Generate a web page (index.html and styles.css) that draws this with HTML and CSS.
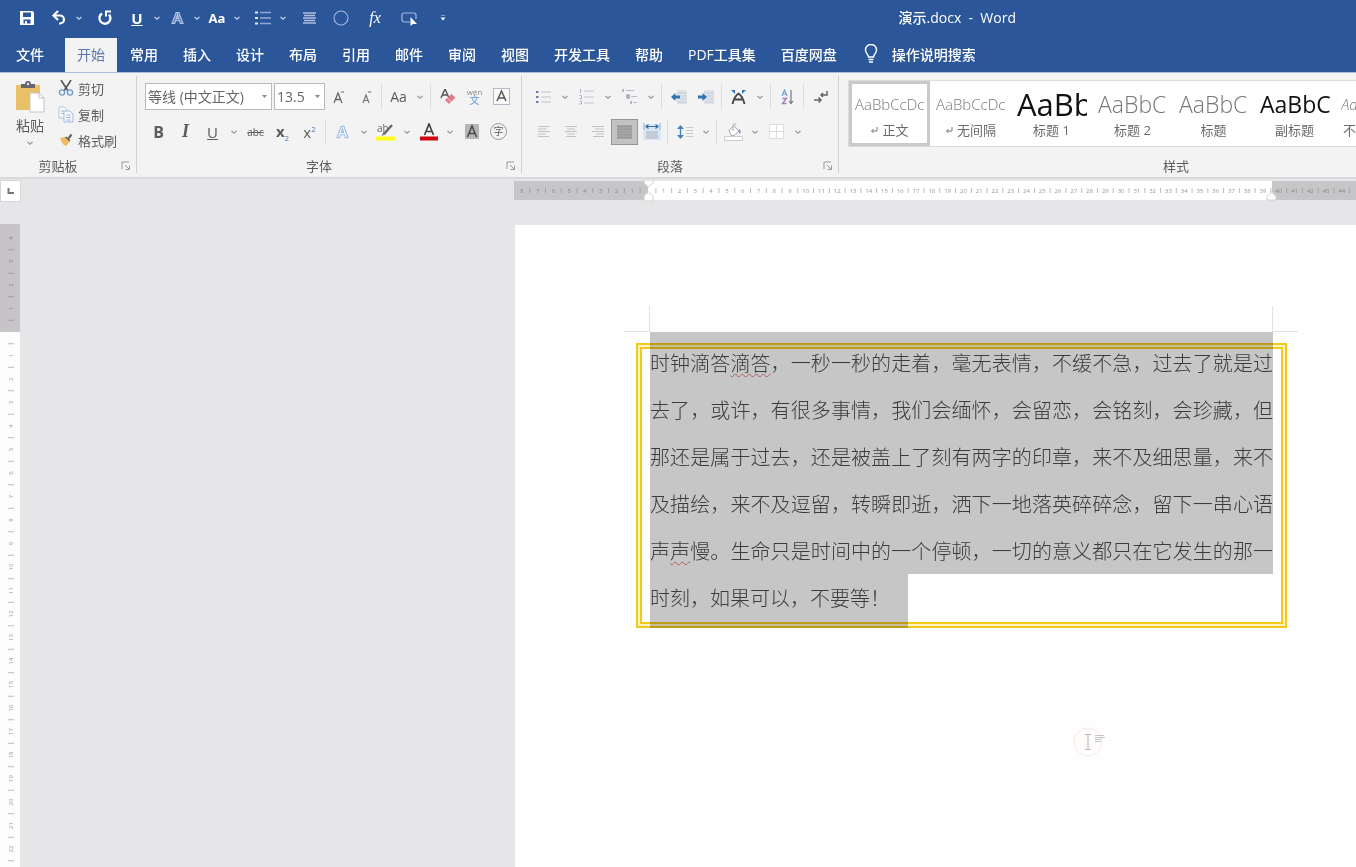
FILE: index.html
```html
<!DOCTYPE html>
<html lang="zh-CN">
<head>
<meta charset="utf-8">
<title>演示.docx - Word</title>
<link rel="stylesheet" href="styles.css">
</head>
<body>
<svg class="defs" aria-hidden="true">
  <symbol id="chev" viewBox="0 0 8 8"><path d="M1.500 3 4 5.2 6.500 3" fill="none" stroke="currentColor" stroke-width="1.3"/></symbol>
  <symbol id="launch" viewBox="0 0 10 10"><path d="M1 8V1h7M4 4l4 4M8.500 4.500v4h-4" fill="none" stroke="#999" stroke-width="1"/></symbol>
  <symbol id="ret" viewBox="0 0 8 8"><path d="M7 1v4H2M3.500 3 1.500 5l2 2" fill="none" stroke="#777" stroke-width="1"/></symbol>
</svg>

<header class="titlebar">
  <div class="qat">
    <button class="ic" aria-label="保存"><svg width="14" height="14" viewBox="0 0 14 14"><path fill="#fff" fill-rule="evenodd" d="M0 0h12.500L14 1.500V14H0zM3 1.500v4.500h8V1.500zM3.500 8.500v4h1.500V10h2v2.500h3.500v-4z"/></svg></button>
    <div class="pair">
      <button class="ic" aria-label="撤消"><svg width="16" height="16" viewBox="0 0 16 16"><path d="M3 5.500h6a4 4 0 0 1 0 8H8" fill="none" stroke="#fff" stroke-width="2.200"/><path d="M7 1 2.500 5.500 7 10" fill="none" stroke="#fff" stroke-width="2.200"/></svg></button>
      <button class="ch" aria-label="撤消列表"><svg><use href="#chev"/></svg></button>
    </div>
    <button class="ic" aria-label="重复"><svg width="16" height="16" viewBox="0 0 16 16"><path d="M5 3.500A5.500 5.500 0 1 0 12 4.500" fill="none" stroke="#fff" stroke-width="2.400"/><path d="M8 1.500h6M9 1.500v5" fill="none" stroke="#fff" stroke-width="2"/></svg></button>
    <div class="pair">
      <button class="ic q-u" aria-label="下划线">U</button>
      <button class="ch" aria-label="下划线样式"><svg><use href="#chev"/></svg></button>
      <button class="ic" aria-label="文本效果"><svg width="13" height="14" viewBox="0 0 14 14"><path d="M1 13 5.500 1h3L13 13h-3l-1-3H5l-1 3zM5.800 7.500h2.400L7 3.800z" fill="#6f8cc0" stroke="#b9c9e6" stroke-width="1.100"/></svg></button>
      <button class="ch" aria-label="文本效果列表"><svg><use href="#chev"/></svg></button>
      <button class="ic q-aa" aria-label="更改大小写">Aa</button>
      <button class="ch" aria-label="大小写列表"><svg><use href="#chev"/></svg></button>
    </div>
    <div class="pair">
      <button class="ic" aria-label="项目符号"><svg width="16" height="14" viewBox="0 0 16 14"><path d="M0 1.500h3M0 7h3M0 12.500h3" stroke="#e4ebf7" stroke-width="2"/><path d="M5 1.500h11M5 7h11M5 12.500h11" stroke="#8fa9d6" stroke-width="1.300"/></svg></button>
      <button class="ch" aria-label="项目符号列表"><svg><use href="#chev"/></svg></button>
    </div>
    <button class="ic" aria-label="居中"><svg width="13" height="12" viewBox="0 0 13 12"><path d="M0 1h13M1 3.500h11M0 6h13M1 8.500h11M0 11h13" stroke="#aebfe0" stroke-width="1.300"/></svg></button>
    <div class="pair wide">
      <button class="ic" aria-label="椭圆"><svg width="16" height="16" viewBox="0 0 16 16"><circle cx="8" cy="8" r="7" fill="none" stroke="#a3b7dd" stroke-width="1.100"/></svg></button>
      <button class="ic q-fx" aria-label="公式"><i>fx</i></button>
      <button class="ic" aria-label="形状"><svg width="17" height="15" viewBox="0 0 17 15"><path d="M9 11H3a2 2 0 0 1-2-2V4a2 2 0 0 1 2-2h10a2 2 0 0 1 2 2v4" fill="none" stroke="#a9bce0" stroke-width="1.200"/><path d="M9.500 6v9l2.500-2h4z" fill="#fff"/></svg></button>
      <button class="ic" aria-label="自定义快速访问工具栏"><svg width="8" height="8" viewBox="0 0 8 8"><path d="M2 1.500h4" stroke="#7f9ccf"/><path d="M1.500 3.500h5L4 6.500z" fill="#fff"/></svg></button>
    </div>
  </div>
  <h1 class="doc-title">演示.docx&nbsp; -&nbsp; Word</h1>
</header>

<nav class="tabs">
  <button class="tab file">文件</button>
  <button class="tab active">开始</button>
  <button class="tab">常用</button>
  <button class="tab">插入</button>
  <button class="tab">设计</button>
  <button class="tab">布局</button>
  <button class="tab">引用</button>
  <button class="tab">邮件</button>
  <button class="tab">审阅</button>
  <button class="tab">视图</button>
  <button class="tab">开发工具</button>
  <button class="tab">帮助</button>
  <button class="tab">PDF工具集</button>
  <button class="tab">百度网盘</button>
  <button class="tab tell"><svg width="14" height="20" viewBox="0 0 14 20"><path d="M4.500 13c0-2.500-3-3.500-3-7a5.500 5.500 0 0 1 11 0c0 3.500-3 4.500-3 7z" fill="none" stroke="#fff" stroke-width="1.400"/><path d="M4.500 15.500h5M5 18h4" stroke="#fff" stroke-width="1.300"/></svg>操作说明搜索</button>
</nav>

<section class="ribbon">
  <div class="group clipboard">
    <div class="group-body">
      <button class="paste">
        <svg width="30" height="32" viewBox="0 0 30 32"><rect x="1" y="4" width="24" height="25" rx="1" fill="#e9bf68"/><path d="M6 3h4a3 3 0 0 1 6 0h4v4H6z" fill="#66666c"/><circle cx="13" cy="3" r="1.200" fill="#eee"/><path d="M15 12h9l5 5v14H15z" fill="#fff" stroke="#c4c4c4"/><path d="M24 12v5h5" fill="none" stroke="#c4c4c4"/></svg>
        <span>粘贴</span>
        <svg class="cv"><use href="#chev"/></svg>
      </button>
      <div class="small-col">
        <button class="small"><svg width="16" height="16" viewBox="0 0 16 16"><path d="M3 0l7 11M13 0 6 11" stroke="#555" stroke-width="1.600"/><circle cx="4" cy="12.500" r="2.600" fill="none" stroke="#6f9cce" stroke-width="1.400"/><circle cx="12" cy="12.500" r="2.600" fill="none" stroke="#6f9cce" stroke-width="1.400"/></svg>剪切</button>
        <button class="small"><svg width="16" height="17" viewBox="0 0 16 17"><path d="M1 1h5l3 3v8H1z" fill="#f8faff" stroke="#b4c3df"/><path d="M6 5h6l3 3v8H6z" fill="#f8faff" stroke="#a5b7da"/><path d="M3 5h3M3 7.500h3M8 9h5M8 11.500h5M8 14h5" stroke="#a5b7da"/></svg>复制</button>
        <button class="small"><svg width="16" height="16" viewBox="0 0 16 16"><path d="M2 6l6-1 4 4-4 5c-3-1-5-4-6-8z" fill="#ecbb62"/><path d="M7.500 5l4.500 4" stroke="#666" stroke-width="1.600"/><path d="M10 7l3.500-4.500" stroke="#666" stroke-width="2.200"/></svg>格式刷</button>
      </div>
    </div>
    <div class="group-label"><span>剪贴板</span><button class="launcher" aria-label="剪贴板设置"><svg width="10" height="10"><use href="#launch"/></svg></button></div>
  </div>

  <div class="group font">
    <div class="group-body rows">
      <div class="row">
        <label class="combo name"><select aria-label="字体"><option>等线 (中文正文)</option></select><svg width="5" height="3" viewBox="0 0 5 3"><path d="M0 0h5L2.500 3z" fill="#888"/></svg></label>
        <label class="combo size"><select aria-label="字号"><option>13.5</option></select><svg width="5" height="3" viewBox="0 0 5 3"><path d="M0 0h5L2.500 3z" fill="#888"/></svg></label>
        <button class="rb" aria-label="增大字号"><svg width="14" height="16" viewBox="0 0 14 16"><path d="M2 14 6 4l4 10M3.500 10.500h5" fill="none" stroke="#666" stroke-width="1.300"/><path d="M9 4l1.500-2L12 4" fill="none" stroke="#777"/></svg></button>
        <button class="rb" aria-label="减小字号"><svg width="14" height="16" viewBox="0 0 14 16"><path d="M4 14 7 6l3 8M5 11.500h4" fill="none" stroke="#777" stroke-width="1.200"/><path d="M9 2l1.500 2L12 2" fill="none" stroke="#777"/></svg></button>
        <span class="sep"></span>
        <button class="rb t-aa" aria-label="更改大小写">Aa</button><button class="ch" aria-label="大小写选项"><svg><use href="#chev"/></svg></button>
        <span class="sep"></span>
        <button class="rb" aria-label="清除格式"><svg width="16" height="16" viewBox="0 0 16 16"><path d="M1 9 5 0l4 9M2.500 6h5" fill="none" stroke="#555" stroke-width="1.400"/><path d="M5 11 11.500 5l4 3.500L9 15z" fill="#e27b88"/><path d="M7.500 9.500l3.500 3.300" stroke="#f7cdd2"/></svg></button>
        <button class="rb t-py" aria-label="拼音指南"><small>wén</small><b>文</b></button>
        <button class="rb" aria-label="字符边框"><svg width="17" height="17" viewBox="0 0 17 17"><rect x=".5" y=".5" width="16" height="16" fill="#fafafa" stroke="#b4bac6"/><path d="M4 13 8.500 3 13 13M5.500 10h6" fill="none" stroke="#555" stroke-width="1.500"/></svg></button>
      </div>
      <div class="row">
        <button class="rb t-b">B</button>
        <button class="rb t-i">I</button>
        <button class="rb t-u">U</button><button class="ch" aria-label="下划线选项"><svg><use href="#chev"/></svg></button>
        <button class="rb t-s">abc</button>
        <button class="rb t-x"><span><b>x</b><sub>2</sub></span></button>
        <button class="rb t-x"><span>x<sup>2</sup></span></button>
        <span class="sep"></span>
        <button class="rb" aria-label="文本效果和版式"><svg width="13" height="14" viewBox="0 0 14 14"><path d="M1 13 5.500 1h3L13 13h-3l-1-3H5l-1 3zM5.800 7.500h2.400L7 3.800z" fill="#f3f8ff" stroke="#9dbbe4" stroke-width="1.200"/></svg></button><button class="ch" aria-label="文本效果选项"><svg><use href="#chev"/></svg></button>
        <button class="rb" aria-label="突出显示"><svg width="19" height="18" viewBox="0 0 19 18"><text x="1" y="9" class="ab">ab</text><path d="M8 11 16 2" stroke="#666" stroke-width="2.400"/><path d="M5.500 13 10 11 7.500 9z" fill="#777"/><path d="M0 13.500h19v4H0z" fill="#ffff1e"/></svg></button><button class="ch" aria-label="突出显示颜色"><svg><use href="#chev"/></svg></button>
        <button class="rb" aria-label="字体颜色"><svg width="18" height="18" viewBox="0 0 18 18"><path d="M4.500 12 9 1l4.500 11M6 8.500h6" fill="none" stroke="#444" stroke-width="1.700"/><path d="M0 13.500h18v4H0z" fill="#d0060e"/></svg></button><button class="ch" aria-label="字体颜色选项"><svg><use href="#chev"/></svg></button>
        <button class="rb" aria-label="字符底纹"><svg width="14" height="15" viewBox="0 0 14 15"><path d="M0 0h14v15H0z" fill="#b5b5b5"/><path d="M2.500 13 7 2l4.500 11M4 9.500h6" fill="none" stroke="#4c4c4c" stroke-width="1.600"/></svg></button>
        <button class="rb t-circ" aria-label="带圈字符"><span>字</span></button>
      </div>
    </div>
    <div class="group-label"><span>字体</span><button class="launcher" aria-label="字体设置"><svg width="10" height="10"><use href="#launch"/></svg></button></div>
  </div>

  <div class="group para">
    <div class="group-body rows">
      <div class="row">
        <button class="rb" aria-label="项目符号"><svg width="15" height="14" viewBox="0 0 15 14"><path d="M0 2h2.500M0 7h2.500M0 12h2.500" stroke="#6a7da8" stroke-width="2"/><path d="M5 2h10M5 7h10M5 12h10" stroke="#bfc3ce"/></svg></button><button class="ch" aria-label="项目符号选项"><svg><use href="#chev"/></svg></button>
        <button class="rb" aria-label="编号"><svg width="15" height="16" viewBox="0 0 15 16"><path d="M1.500 0v4M.5 6.500h2v3h-2M.5 12h2v3h-2" fill="none" stroke="#aab0bf"/><path d="M5 2h10M5 8h10M5 14h10" stroke="#c3c6cf"/></svg></button><button class="ch" aria-label="编号选项"><svg><use href="#chev"/></svg></button>
        <button class="rb" aria-label="多级列表"><svg width="16" height="15" viewBox="0 0 16 15"><path d="M1 0v3M5 6h2v3H5zM9 12v3" fill="none" stroke="#8790aa" stroke-width="1.200"/><path d="M4 1.500h8M9 7.500h6M11 13.500h4" stroke="#b9bdc9"/></svg></button><button class="ch" aria-label="多级列表选项"><svg><use href="#chev"/></svg></button>
        <span class="sep"></span>
        <button class="rb" aria-label="减少缩进量"><svg width="16" height="14" viewBox="0 0 16 14"><path d="M6 0h10v14H6z" fill="#dfe2e8"/><path d="M6 3h10M9 6h7M9 9h7M6 12h10" stroke="#c9cdd5"/><path d="M0 7l4.500-4v2.500H9v3H4.500V11z" fill="#2f75b5"/></svg></button>
        <button class="rb" aria-label="增加缩进量"><svg width="16" height="14" viewBox="0 0 16 14"><path d="M6 0h10v14H6z" fill="#dfe2e8"/><path d="M6 3h10M9 6h7M9 9h7M6 12h10" stroke="#c9cdd5"/><path d="M9 7 4.500 3v2.500H0v3h4.500V11z" fill="#2f75b5"/></svg></button>
        <span class="sep"></span>
        <button class="rb" aria-label="中文版式"><svg width="17" height="16" viewBox="0 0 17 16"><path d="M2.500 15C4 9 6 6 8.500 4.500 11 6 13 9 14.500 15M5 10.500h7" fill="none" stroke="#444" stroke-width="1.900"/><path d="M1 1h4v4zM16 1h-4v4z" fill="#2f75b5"/></svg></button><button class="ch" aria-label="中文版式选项"><svg><use href="#chev"/></svg></button>
        <span class="sep"></span>
        <button class="rb" aria-label="排序"><svg width="13" height="16" viewBox="0 0 13 16"><path d="M1 7 3.500 1 6 7M2 5h3" fill="none" stroke="#6f9fd3" stroke-width="1.200"/><path d="M1.500 9.500h4l-4 5h4" fill="none" stroke="#a678c0" stroke-width="1.300"/><path d="M10 1v13M8 12l2 2.500 2-2.500" fill="none" stroke="#777" stroke-width="1.200"/></svg></button>
        <span class="sep"></span>
        <button class="rb" aria-label="显示编辑标记"><svg width="16" height="14" viewBox="0 0 16 14"><path d="M14 1v4H8M10 3 8 5l2 2M1 10h7M5.500 7.500 8 10l-2.500 2.500" fill="none" stroke="#666" stroke-width="1.500"/></svg></button>
      </div>
      <div class="row">
        <button class="rb" aria-label="左对齐"><svg width="14" height="13" viewBox="0 0 14 13"><path d="M1 1.500h12M1 4h9M1 6.500h12M1 9h8M1 11.500h11" stroke="#c2c2c2"/></svg></button>
        <button class="rb" aria-label="居中"><svg width="14" height="13" viewBox="0 0 14 13"><path d="M1 1.500h12M3 4h8M1 6.500h12M3 9h8M2 11.500h10" stroke="#c2c2c2"/></svg></button>
        <button class="rb" aria-label="右对齐"><svg width="14" height="13" viewBox="0 0 14 13"><path d="M1 1.500h12M4 4h9M1 6.500h12M5 9h8M2 11.500h11" stroke="#c2c2c2"/></svg></button>
        <button class="rb on" aria-label="两端对齐" aria-pressed="true"><svg width="15" height="14" viewBox="0 0 15 14"><path d="M0 0h15v14H0z" fill="#a6a6a6"/><path d="M0 1.500h15M0 4.200h15M0 7h15M0 9.800h15M0 12.500h15" stroke="#989898"/></svg></button>
        <button class="rb" aria-label="分散对齐"><svg width="18" height="18" viewBox="0 0 18 18"><path d="M0 1h18v16H0z" fill="#dbe6f5"/><path d="M3 8h12v8H3z" fill="#c4cbd6"/><path d="M1 0v7M17 0v7" stroke="#9db5d8"/><path d="M3 3.500h12M5.500 1.500l-2.500 2 2.500 2M12.500 1.500l2.500 2-2.500 2" fill="none" stroke="#336fae" stroke-width="1.200"/></svg></button>
        <span class="sep"></span>
        <button class="rb" aria-label="行和段落间距"><svg width="16" height="16" viewBox="0 0 16 16"><path d="M3.500 2v12" stroke="#4682bd" stroke-width="1.400"/><path d="M0 5 3.500 1 7 5zM0 11l3.500 4L7 11z" fill="#4682bd"/><path d="M9 3.500h7M9 6.500h7M9 9.500h7M9 12.500h7" stroke="#c9c9c9"/></svg></button><button class="ch" aria-label="行距选项"><svg><use href="#chev"/></svg></button>
        <span class="sep"></span>
        <button class="rb" aria-label="底纹"><svg width="20" height="18" viewBox="0 0 20 18"><path d="M5 7 10 3l5 5-5 4.500H7z" fill="#fff" stroke="#a9a9b3"/><path d="M9 8V2.500a1.500 1.500 0 0 1 3 0" fill="none" stroke="#a9a9b3"/><path d="M15 6c2 1 2 3 1 5-1-1-1.500-3-1-5z" fill="#7c8fbf"/><path d="M.5 13.500h18v4H.5z" fill="#fff" stroke="#ccc"/></svg></button><button class="ch" aria-label="底纹颜色"><svg><use href="#chev"/></svg></button>
        <button class="rb" aria-label="边框"><svg width="15" height="15" viewBox="0 0 15 15"><path d="M.5.500h14v14H.5zM7.500.500v14M.5 7.500h14" fill="#fff" stroke="#dcdcdc"/></svg></button><button class="ch" aria-label="边框选项"><svg><use href="#chev"/></svg></button>
      </div>
    </div>
    <div class="group-label"><span>段落</span><button class="launcher" aria-label="段落设置"><svg width="10" height="10"><use href="#launch"/></svg></button></div>
  </div>

  <div class="group styles">
    <div class="gallery">
      <button class="style selected"><span class="sample">AaBbCcDc</span><span class="cap"><svg width="8" height="8"><use href="#ret"/></svg>正文</span></button>
      <button class="style"><span class="sample">AaBbCcDc</span><span class="cap"><svg width="8" height="8"><use href="#ret"/></svg>无间隔</span></button>
      <button class="style"><span class="sample h1">AaBb</span><span class="cap">标题 1</span></button>
      <button class="style"><span class="sample h2">AaBbC</span><span class="cap">标题 2</span></button>
      <button class="style"><span class="sample h2">AaBbC</span><span class="cap">标题</span></button>
      <button class="style"><span class="sample h2 strong">AaBbC</span><span class="cap">副标题</span></button>
      <button class="style"><span class="sample em">AaBbCcDc</span><span class="cap">不明显强调</span></button>
    </div>
    <div class="group-label"><span>样式</span></div>
  </div>
</section>

<main class="workspace">
  <div class="corner"><button class="tabstop" aria-label="左对齐制表符"><svg width="8" height="8" viewBox="0 0 8 8"><path d="M1.500 1v5H7" fill="none" stroke="#777" stroke-width="2"/></svg></button></div>
  <div class="hruler" id="hruler">
    <div class="hr-margin before"></div>
    <div class="hr-text"></div>
    <div class="hr-margin after"></div>
    <svg class="indent first" width="11" height="22" viewBox="0 0 11 22"><path d="M1 0h9v3L5.500 7 1 3z" fill="#fff" stroke="#d0d0d0"/><path d="M5.500 12 10 16v5H1v-5z" fill="#fff" stroke="#d0d0d0"/></svg>
    <svg class="indent last" width="11" height="22" viewBox="0 0 11 22"><path d="M5.500 12 10 16v4H1v-4z" fill="#fff" stroke="#d0d0d0"/></svg>
  </div>
  <div class="vruler" id="vruler">
    <div class="vr-margin"></div>
    <div class="vr-text"></div>
  </div>
  <article class="page">
    <div class="text-block">
      <span class="mark tl"></span><span class="mark tr"></span>
      <div class="frame"></div>
      <p>时钟滴答<span class="typo">滴答</span>，一秒一秒的走着，毫无表情，不缓不急，过去了就是过去了，或许，有很多事情，我们会缅怀，会留恋，会铭刻，会珍藏，但那还是属于过去，还是被盖上了刻有两字的印章，来不及细思量，来不及描绘，来不及逗留，转瞬即逝，洒下一地落英碎碎念，留下一串心语声<span class="typo">声</span>慢。生命只是时间中的一个停顿，一切的意义都只在它发生的那一时刻，如果可以，不要等！</p>
      <div class="sel full"></div><div class="sel tail"></div>
    </div>
    <svg class="pointer" width="34" height="30" viewBox="0 0 34 30"><circle cx="15" cy="15" r="14" fill="#fffcfc" stroke="#f8e8ea"/><path d="M12 7.500h2.500l.5.500.5-.500H18M15 8v14M12 22.500h2.500l.5-.5.5.5H18" fill="none" stroke="#b4b4b4"/><path d="M22 8.500h9M22 10.500h10M22 12.500h6M22 14.500h6" stroke="#c4c4c4"/></svg>
  </article>
</main>
<script src="rulers.js"></script>
</body>
</html>
```

FILE: styles.css
```css
* { box-sizing: border-box; }

body {
  margin: 0;
  height: 100vh;
  display: flex;
  flex-direction: column;
  overflow: hidden;
  font-family: "Open Sans", "Noto Sans CJK SC", sans-serif;
  font-size: 13px;
  color: #5c5c5c;
  background: #e6e6e8;
}

button {
  margin: 0;
  padding: 0;
  border: 0;
  background: none;
  font: inherit;
  color: inherit;
  white-space: nowrap;
}

svg { display: block; flex: none; }
.defs { position: absolute; width: 0; height: 0; }

/* title bar */
.titlebar {
  flex: none;
  display: flex;
  align-items: center;
  justify-content: space-between;
  height: 38px;
  padding: 0 340px 2px 14px;
  background: #2b579a;
  color: #fff;
}
.qat { display: flex; align-items: center; gap: 6px; }
.pair { display: flex; align-items: center; }
.pair.wide { gap: 8px; }
.ic, .ch, .rb { display: flex; align-items: center; justify-content: center; }
.ic { width: 26px; height: 26px; }
.ch { width: 14px; height: 26px; }
.ch svg, .cv { width: 8px; height: 8px; }
.qat .ch { color: #c3d1ea; }
.q-u { font-size: 15px; font-weight: 700; text-decoration: underline; }
.q-aa { font-size: 13px; font-weight: 700; }
.q-fx { font-family: "Liberation Serif", serif; font-size: 16px; }
.doc-title { margin: 0; font-size: 14px; line-height: 20px; font-weight: 500; }

/* tabs */
.tabs {
  flex: none;
  display: flex;
  gap: 1px;
  height: 34px;
  padding-left: 4px;
  background: #2b579a;
  color: #fff;
  font-size: 14px;
  font-weight: 500;
}
.tab { padding: 0 12px 2px; }
.tab.file { margin-right: 8px; }
.tab.active { background: #f3f3f3; color: #5878b0; font-weight: 400; }
.tab.tell { display: flex; align-items: center; gap: 14px; margin-left: 2px; }

/* ribbon */
.ribbon {
  flex: none;
  display: flex;
  height: 107px;
  overflow: hidden;
  padding-top: 3px;
  background: #f3f3f3;
  border-top: 1px solid #a9bfdf;
  border-bottom: 2px solid #dadadc;
}
.ribbon .ch, .cv { color: #9a9a9a; }
.group { flex: none; display: flex; flex-direction: column; margin-bottom: 4px; border-right: 1px solid #d2d2d2; }
.group-body { flex: 1; display: flex; }
.group-label {
  display: grid;
  grid-template-columns: 1fr 20px;
  align-items: center;
  height: 20px;
  margin-bottom: -3px;
  line-height: 18px;
}
.group-label span { text-align: center; }
.launcher { justify-self: center; }

.clipboard { width: 137px; }
.paste { display: flex; flex-direction: column; align-items: center; width: 56px; padding-top: 5px; padding-left: 4px; line-height: 20px; font-size: 14px; }
.paste span { margin: 3px 0; }
.small-col { display: flex; flex-direction: column; }
.small { display: flex; align-items: center; gap: 4px; height: 26px; padding: 0 0 2px 2px; }
.small svg { width: 16px; }

.rows { flex-direction: column; gap: 2px; padding-top: 4px; }
.row { display: flex; align-items: center; height: 33px; }
.row .rb { width: 27px; height: 26px; }
.row .ch { width: 16px; }
.sep { width: 6px; height: 25px; border-right: 1px solid #dcdcdc; margin-left: -3px; margin-right: 3px; }
.font { width: 385px; padding-left: 8px; }
.font .group-label { margin-left: -8px; }
.para { width: 317px; padding-left: 8px; }
.para .group-label { margin-left: -8px; }

.combo { display: grid; align-items: center; margin-right: 2px; }
.combo select, .combo svg { grid-area: 1 / 1; }
.combo svg { justify-self: end; margin-right: 5px; pointer-events: none; }
.combo select {
  appearance: none;
  width: 100%;
  height: 27px;
  padding: 0 2px;
  border: 1px solid #b9b9b9;
  border-radius: 0;
  background: #fff;
  color: #666;
  font: inherit;
  font-size: 14px;
}
.combo.name { width: 127px; }
.combo.size { width: 51px; margin-right: 0; }

.t-aa { font-size: 14px; }
.t-py { flex-direction: column; line-height: 8px; color: #888; }
.t-py small { font-size: 8px; line-height: 6px; }
.t-py b { font-size: 10px; line-height: 10px; font-weight: 500; color: #7fa6d6; }
.t-b { font-size: 16px; font-weight: 700; }
.t-i { font-family: "Liberation Serif", serif; font-size: 18px; font-style: italic; font-weight: 700; }
.t-u { font-size: 15px; text-decoration: underline; }
.t-s { font-size: 10px; text-decoration: line-through; }
.t-x { font-size: 15px; line-height: 20px; }
.t-x sub, .t-x sup { font-size: 8px; line-height: 8px; color: #4d7fbd; }
.t-circ span { width: 17px; height: 17px; border: 1px solid #999; border-radius: 50%; font-size: 10px; line-height: 15px; }
.ab { font-size: 10px; fill: #666; }
.rb.on { background: #c3c3c3; border: 1px solid #979797; }

/* style gallery */
.styles { min-width: 666px; padding: 4px 0 0 9px; }
.gallery { display: flex; flex: none; height: 67px; background: #fff; border: 1px solid #dcdcdc; }
.style { width: 81px; padding: 4px 3px 0; border: 3px solid transparent; display: flex; flex-direction: column; }
.style.selected { border-color: #cbc8c9; }
.sample { width: 70px; height: 32px; line-height: 32px; overflow: hidden; text-align: left; font-size: 15px; font-weight: 300; color: #777; }
.sample.h1 { font-size: 31px; font-weight: 400; color: #111; }
.sample.h2 { font-size: 23px; }
.sample.strong { font-weight: 400; color: #111; }
.sample.em { font-style: italic; }
.cap { display: flex; align-items: center; justify-content: center; align-self: stretch; gap: 4px; line-height: 20px; color: #6a6a6a; }
.styles .group-label { grid-template-columns: 1fr; margin-top: auto; }

/* workspace */
.workspace {
  flex: 1;
  min-height: 0;
  display: grid;
  grid-template-columns: 20px 494px 1fr;
  grid-template-rows: 46px 1fr;
}
.corner { grid-column: 1 / 3; padding-top: 1px; }
.tabstop { display: grid; place-items: center; width: 21px; height: 22px; background: #fff; border: 1px solid #d6d6d8; }
.hruler { position: relative; display: flex; height: 19px; margin-top: 2px; overflow: visible; min-width: 0; }
.hr-margin { background: #c6c6c8; overflow: hidden; }
.before { flex: none; width: 134px; }
.after { flex: 1; min-width: 0; }
.hr-text { flex: none; width: 624px; background: #fff; }
.indent { position: absolute; top: -1px; }
.indent.first { left: 129px; }
.indent.last { left: 752px; }
.vruler { display: flex; flex-direction: column; margin-top: -1px; overflow: hidden; }
.vr-margin { flex: none; height: 108px; background: #c6c4c6; }
.vr-text { flex: 1; background: #fdfdfd; }
.num { font-size: 6px; fill: #999; text-anchor: middle; }
.tick { stroke: #bbb; }
.hr-margin .tick, .vr-margin .tick { stroke: #a2a2a2; }
.hr-margin .num, .vr-margin .num { fill: #8a8a8a; }

.page {
  position: relative;
  grid-column: 3;
  margin-left: 1px;
  padding: 107px 0 0 134px;
  background: #fefefe;
  overflow: hidden;
}
.text-block { position: relative; width: 624px; padding: 7px 0 7px 1px; }
.text-block p {
  margin: 0;
  font-family: "Noto Sans CJK SC", sans-serif;
  font-size: 20px;
  font-weight: 300;
  line-height: 47px;
  text-align: justify;
  color: #4c4c4c;
}
.typo { text-decoration: underline wavy #e27a80 1px; text-underline-offset: 2px; }
.frame { position: absolute; inset: 11px -14px 0 -13px; border: 2px solid #f3c91c; outline: 2px solid #f3c91c; outline-offset: -6px; box-shadow: inset 0 0 0 2px #fdf4c4; }
.sel { position: absolute; left: 1px; background: #c7c7c7; mix-blend-mode: multiply; }
.sel.full { top: 0; width: 623px; height: 242px; }
.sel.tail { top: 242px; bottom: 0; width: 258px; }
.mark { position: absolute; top: -26px; width: 26px; height: 26px; border-bottom: 1px solid #e2e2e2; }
.mark.tl { left: -25px; border-right: 1px solid #e2e2e2; }
.mark.tr { right: -25px; border-left: 1px solid #e2e2e2; }
.pointer { position: absolute; left: 558px; top: 502px; }
```

FILE: rulers.js
```js
const NS = "http://www.w3.org/2000/svg";

function node(name, attrs, text) {
  const el = document.createElementNS(NS, name);
  for (const key in attrs) el.setAttribute(key, attrs[key]);
  if (text !== undefined) el.textContent = text;
  return el;
}

/* Horizontal scale: numbers run away from the origin, ticks fall halfway between. */
function horizontal(host, width, origin, step, from, to) {
  const svg = node("svg", { width: width, height: 19 });
  for (let n = from; n <= to; n++) {
    const x = origin + n * step;
    if (n !== 0) svg.append(node("text", { x: x, y: 12, class: "num" }, Math.abs(n)));
    svg.append(node("path", { d: `M${x + step / 2} 7v5`, class: "tick" }));
  }
  host.append(svg);
}

function vertical(host, height, origin, step, from, to) {
  const svg = node("svg", { width: 20, height: height });
  for (let n = from; n <= to; n++) {
    const y = origin + n * step;
    if (n !== 0) svg.append(node("text", { x: 11, y: y + 2, class: "num", transform: `rotate(-90 11 ${y})` }, Math.abs(n)));
    svg.append(node("path", { d: `M8 ${y + step / 2}h6`, class: "tick" }));
  }
  host.append(svg);
}

const H = 15.77;
const V = 23.5;
const after = document.querySelector(".after");
const below = document.querySelector(".vr-text");
horizontal(document.querySelector(".before"), 134, 134, H, -8, -1);
horizontal(document.querySelector(".hr-text"), 624, 0, H, 0, 39);
horizontal(after, after.clientWidth, -624, H, 40, 39 + Math.floor(after.clientWidth / H));
vertical(document.querySelector(".vr-margin"), 108, 108, V, -4, -1);
vertical(below, below.clientHeight, 0, V, 0, Math.floor(below.clientHeight / V));
```
